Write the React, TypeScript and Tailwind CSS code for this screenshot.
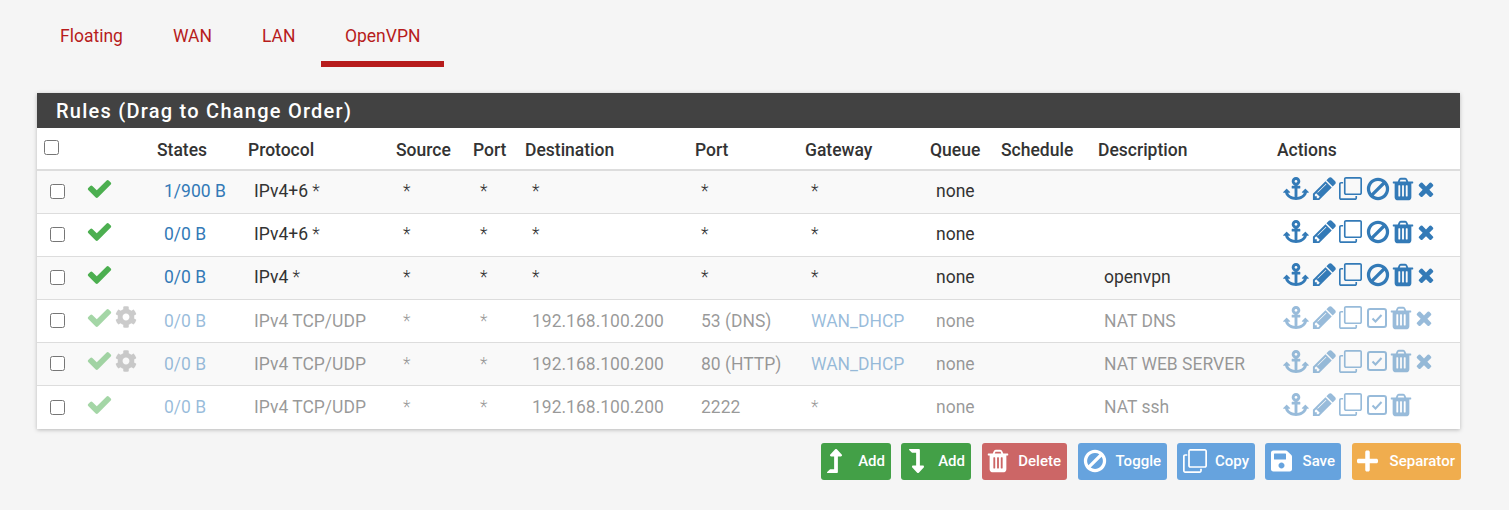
import { FaAnchor, FaCog, FaLevelDownAlt, FaLevelUpAlt, FaPlus, FaSave } from 'react-icons/fa';

const PATHS = {
  check: 'M1671 566q0 40-28 68l-724 724-136 136q-28 28-68 28t-68-28l-136-136-362-362q-28-28-28-68t28-68l136-136q28-28 68-28t68 28l294 295 656-657q28-28 68-28t68 28l136 136q28 28 28 68z',
  pencil: 'M491 1536l91-91-235-235-91 91v107h128v128h107zm523-928q0-22-22-22-10 0-17 7l-542 542q-7 7-7 17 0 22 22 22 10 0 17-7l542-542q7-7 7-17zm-54-192l416 416-832 832h-416v-416zm683 96q0 53-37 90l-166 166-416-416 166-165q36-38 90-38 53 0 91 38l235 234q37 39 37 91z',
  clone: 'M1664 1632v-1088q0-13-9.500-22.500t-22.500-9.500h-1088q-13 0-22.500 9.500t-9.500 22.500v1088q0 13 9.500 22.500t22.500 9.500h1088q13 0 22.500-9.500t9.500-22.500zm128-1088v1088q0 66-47 113t-113 47h-1088q-66 0-113-47t-47-113v-1088q0-66 47-113t113-47h1088q66 0 113 47t47 113zm-384-384v160h-128v-160q0-13-9.500-22.500t-22.500-9.500h-1088q-13 0-22.500 9.500t-9.500 22.500v1088q0 13 9.500 22.500t22.500 9.500h160v128h-160q-66 0-113-47t-47-113v-1088q0-66 47-113t113-47h1088q66 0 113 47t47 113z',
  ban: 'M1440 893q0-161-87-295l-754 753q137 89 297 89 111 0 211.500-43.500t173.500-116.500 116-174.500 43-212.500zm-999 299l755-754q-135-91-300-91-148 0-273 73t-198 199-73 274q0 162 89 299zm1223-299q0 157-61 300t-163.500 246-245 164-298.500 61-298.500-61-245-164-163.500-246-61-300 61-299.500 163.500-245.500 245-164 298.500-61 298.500 61 245 164 163.500 245.500 61 299.500z',
  trash: 'M704 1376v-704q0-14-9-23t-23-9h-64q-14 0-23 9t-9 23v704q0 14 9 23t23 9h64q14 0 23-9t9-23zm256 0v-704q0-14-9-23t-23-9h-64q-14 0-23 9t-9 23v704q0 14 9 23t23 9h64q14 0 23-9t9-23zm256 0v-704q0-14-9-23t-23-9h-64q-14 0-23 9t-9 23v704q0 14 9 23t23 9h64q14 0 23-9t9-23zm-544-992h448l-48-117q-7-9-17-11h-317q-10 2-17 11zm928 32v64q0 14-9 23t-23 9h-96v948q0 83-47 143.500t-113 60.500h-832q-66 0-113-58.500t-47-141.500v-952h-96q-14 0-23-9t-9-23v-64q0-14 9-23t23-9h309l70-167q15-37 54-63t79-26h320q40 0 79 26t54 63l70 167h309q14 0 23 9t9 23z',
  times: 'M1490 1322q0 40-28 68l-136 136q-28 28-68 28t-68-28l-294-294-294 294q-28 28-68 28t-68-28l-136-136q-28-28-28-68t28-68l294-294-294-294q-28-28-28-68t28-68l136-136q28-28 68-28t68 28l294 294 294-294q28-28 68-28t68 28l136 136q28 28 28 68t-28 68l-294 294 294 294q28 28 28 68z',
};

function Glyph({ d, className }: { d: string; className: string }) {
  return (
    <svg viewBox="0 0 1792 1792" className={`shrink-0 ${className}`} fill="currentColor">
      <path d={d} />
    </svg>
  );
}

function CheckSquare({ className }: { className: string }) {
  return (
    <svg viewBox="0 0 20 20" className={`shrink-0 ${className}`} fill="none" stroke="currentColor">
      <rect x="1" y="1" width="18" height="18" rx="2" strokeWidth="2" />
      <path d="M5.500 10.500l3 3L14.500 7" strokeWidth="2" />
    </svg>
  );
}

function Star() {
  return <span className="font-light">*</span>;
}

interface Rule {
  states: string;
  proto: string;
  anyProto?: boolean;
  dest: string;
  port: string;
  gateway: string;
  desc: string;
  disabled?: boolean;
  nat?: boolean;
  noDelete?: boolean;
}

const RULES: Rule[] = [
  { states: '1/900 B', proto: 'IPv4+6', anyProto: true, dest: '*', port: '*', gateway: '*', desc: '' },
  { states: '0/0 B', proto: 'IPv4+6', anyProto: true, dest: '*', port: '*', gateway: '*', desc: '' },
  { states: '0/0 B', proto: 'IPv4', anyProto: true, dest: '*', port: '*', gateway: '*', desc: 'openvpn' },
  { states: '0/0 B', proto: 'IPv4 TCP/UDP', dest: '192.168.100.200', port: '53 (DNS)', gateway: 'WAN_DHCP', desc: 'NAT DNS', disabled: true, nat: true },
  { states: '0/0 B', proto: 'IPv4 TCP/UDP', dest: '192.168.100.200', port: '80 (HTTP)', gateway: 'WAN_DHCP', desc: 'NAT WEB SERVER', disabled: true, nat: true },
  { states: '0/0 B', proto: 'IPv4 TCP/UDP', dest: '192.168.100.200', port: '2222', gateway: '*', desc: 'NAT ssh', disabled: true, noDelete: true },
];

const COLS = [43, 77, 91, 148, 77, 52, 170, 110, 125, 71, 97, 179, 183];
const HEADS = ['', 'States', 'Protocol', 'Source', 'Port', 'Destination', 'Port', 'Gateway', 'Queue', 'Schedule', 'Description', 'Actions'];

function starOr(value: string) {
  return value === '*' ? <Star /> : value;
}

function RuleRow({ rule, index }: { rule: Rule; index: number }) {
  const tone = rule.disabled ? 'text-[#33333380]' : 'text-[#333333]';
  const link = rule.disabled ? 'text-[#337ab780]' : 'text-[#337ab7]';
  const cell = 'pb-[0.500px] pl-[6px] align-middle';
  const wide = 'pb-[0.500px] pl-[7px] align-middle';
  const iconTone = rule.disabled ? 'opacity-50' : '';
  return (
    <tr className={`h-[43.150px] border-t border-[#dddddd] ${index % 2 === 0 ? 'bg-[#f9f9f9]' : 'bg-white'}`}>
      <td className="pb-[1px] pl-[13px] align-middle">
        <input type="checkbox" readOnly className="block h-[15px] w-[15px]" />
      </td>
      <td className="pl-[6px] align-middle">
        <div className={`flex items-center pb-[7px] ${iconTone}`}>
          <Glyph d={PATHS.check} className="h-[27px] w-[27px] text-[#4caf50]" />
          {rule.nat && <FaCog className="ml-[2px] h-[22px] w-[22px] text-[#999999]" />}
        </div>
      </td>
      <td className={`${wide} ${link}`}>{rule.states}</td>
      <td className={`${cell} ${tone}`}>
        {rule.proto}
        {rule.anyProto && (
          <>
            {' '}
            <Star />
          </>
        )}
      </td>
      <td className={`${wide} ${tone}`}><Star /></td>
      <td className={`${wide} ${tone}`}><Star /></td>
      <td className={`${wide} ${tone}`}>{starOr(rule.dest)}</td>
      <td className={`${cell} ${tone}`}>{starOr(rule.port)}</td>
      <td className={`${cell} ${rule.gateway !== '*' ? link : tone}`}>{starOr(rule.gateway)}</td>
      <td className={`${cell} ${tone}`}>none</td>
      <td className={cell}></td>
      <td className={`${cell} ${tone}`}>{rule.desc}</td>
      <td className="pl-[6px] align-middle">
        <div className={`flex items-center pb-[6px] text-[#337ab7] ${iconTone}`}>
          <FaAnchor className="h-[23px] w-[26px] shrink-0" />
          <Glyph d={PATHS.pencil} className="ml-[2px] h-[27px] w-[27px]" />
          <Glyph d={PATHS.clone} className="ml-[1px] h-[23px] w-[23px] -scale-y-100" />
          {rule.disabled ? (
            <>
              <CheckSquare className="ml-[5px] h-[20px] w-[20px]" />
              <Glyph d={PATHS.trash} className="ml-[1px] h-[26px] w-[26px]" />
            </>
          ) : (
            <>
              <Glyph d={PATHS.ban} className="ml-[3px] h-[26px] w-[26px]" />
              <Glyph d={PATHS.trash} className="ml-[-1px] h-[26px] w-[26px]" />
            </>
          )}
          {!rule.noDelete && <Glyph d={PATHS.times} className="ml-[-1px] h-[22px] w-[22px]" />}
        </div>
      </td>
    </tr>
  );
}

function ActionButton({ label, icon, className }: { label: string; icon: React.ReactNode; className: string }) {
  return (
    <button className={`flex h-[37px] items-center justify-between rounded-[3px] pr-[6px] text-[15px] font-medium text-white ${className}`}>
      {icon}
      <span>{label}</span>
    </button>
  );
}

export default function App() {
  return (
    <div className="h-[510px] w-[1509px] overflow-hidden bg-[#f5f5f5] pl-[37px] pr-[48px] font-['Roboto',sans-serif] text-[#333333]">
      {/* Tabs */}
      <div className="ml-[-1px] flex h-[67px] gap-[2px] text-[17.500px] text-[#b71c1c]">
        <a className="flex items-center border-b-[6px] border-transparent px-[24px] pt-[12px]">Floating</a>
        <a className="flex items-center border-b-[6px] border-transparent px-[24px] pt-[12px]">WAN</a>
        <a className="flex items-center border-b-[6px] border-transparent px-[24px] pt-[12px]">LAN</a>
        <a className="flex items-center border-b-[6px] border-[#b71c1c] px-[23.500px] pt-[12px]">OpenVPN</a>
      </div>

      {/* Panel */}
      <div className="mt-[26px] w-[1423px] bg-white shadow-[0_1px_4px_rgba(0,0,0,0.25)]">
        <div className="flex h-[35px] items-center bg-[#424242] pl-[19px] text-[20px] font-medium tracking-[1.250px] text-white">
          Rules (Drag to Change Order)
        </div>
        <table className="w-[1423px] table-fixed border-collapse text-[17.500px]">
          <colgroup>
            {COLS.map((w, i) => (
              <col key={i} width={w} />
            ))}
          </colgroup>
          <thead>
            <tr className="h-[42px] border-b-[2px] border-[#dddddd]">
              <th className="pl-[7px] text-left align-middle">
                <input type="checkbox" readOnly className="mb-[3px] block h-[15px] w-[15px]" />
              </th>
              {HEADS.map((h, i) => (
                <th key={i} className="pt-[4px] text-left align-middle font-medium">
                  {h}
                </th>
              ))}
            </tr>
          </thead>
          <tbody>
            {RULES.map((r, i) => (
              <RuleRow key={i} rule={r} index={i} />
            ))}
          </tbody>
        </table>
      </div>

      {/* Buttons */}
      <div className="mt-[14px] flex justify-end gap-[10px]">
        <ActionButton label="Add" icon={<FaLevelUpAlt className="ml-[6px] h-[24px] w-[15px]" />} className="w-[70px] bg-[#43a047]" />
        <ActionButton label="Add" icon={<FaLevelDownAlt className="ml-[8px] h-[24px] w-[15px]" />} className="w-[70px] bg-[#43a047]" />
        <ActionButton label="Delete" icon={<Glyph d={PATHS.trash} className="ml-[3px] h-[26px] w-[26px]" />} className="ml-px w-[85px] bg-[#cc6666]" />
        <ActionButton label="Toggle" icon={<Glyph d={PATHS.ban} className="ml-[4px] h-[26px] w-[26px]" />} className="ml-px w-[89px] bg-[#66a3de]" />
        <ActionButton label="Copy" icon={<Glyph d={PATHS.clone} className="ml-[6px] h-[24px] w-[24px] -scale-y-100" />} className="w-[78px] bg-[#66a3de]" />
        <ActionButton label="Save" icon={<FaSave className="ml-[6px] h-[24px] w-[21px]" />} className="w-[76px] bg-[#66a3de]" />
        <ActionButton label="Separator" icon={<FaPlus className="ml-[5px] h-[24px] w-[21px]" />} className="ml-px w-[109px] bg-[#f0ad4e]" />
      </div>
    </div>
  );
}
